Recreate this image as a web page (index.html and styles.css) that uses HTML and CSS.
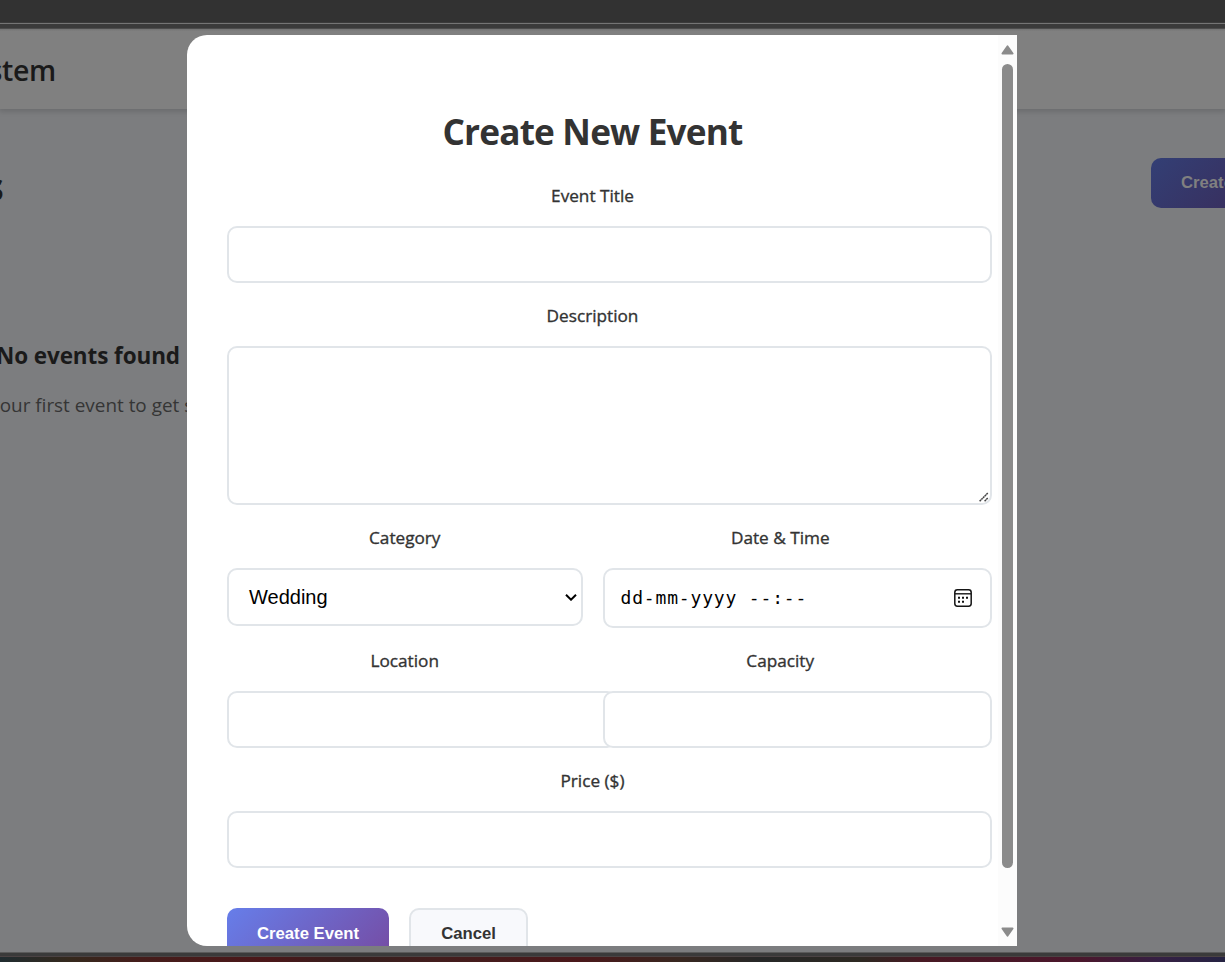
FILE: index.html
```html
<!DOCTYPE html>
<html lang="en">
<head>
<meta charset="utf-8">
<title>Create New Event</title>
<link rel="stylesheet" href="styles.css">
</head>
<body>
<div class="window-top"></div>
<div class="app">
  <header class="header"><span class="brand">System</span></header>
  <main class="main">
    <div class="page-head">
      <h1 class="page-title">Events</h1>
      <span class="btn create">Create Event</span>
    </div>
    <section class="empty">
      <h3 class="empty-title">No events found</h3>
      <p class="empty-text">Create your first event to get started</p>
    </section>
  </main>
</div>
<div class="window-bottom"></div>

<div class="overlay">
  <div class="modal">
    <div class="modal-body">
      <h2 class="title">Create New Event</h2>
      <div class="group">
        <label class="label" for="title">Event Title</label>
        <input class="field" id="title">
      </div>
      <div class="group">
        <label class="label">Description</label>
        <div class="field area">
          <svg width="10" height="10" viewBox="0 0 10 10"><path d="M.6 9.3 8.9.9M5.6 9.2l3.3-3.3" fill="none" stroke="#444" stroke-width="1.5" stroke-dasharray="2 .4"/></svg>
        </div>
      </div>
      <div class="row">
        <div class="group">
          <label class="label">Category</label>
          <div class="field select"><span>Wedding</span>
            <svg width="12" height="8" viewBox="0 0 12 8"><path d="M1 1.7 6 6.7l5-5" fill="none" stroke="#000" stroke-width="2"/></svg>
          </div>
        </div>
        <div class="group">
          <label class="label">Date &amp; Time</label>
          <div class="field date"><span class="date-value">dd-mm-yyyy --:--</span>
            <svg width="18" height="18" viewBox="0 0 18 18"><rect x=".8" y=".8" width="16.4" height="16.4" rx="2.6" fill="none" stroke="#151515" stroke-width="1.5"/><path d="M1 4.8h16" stroke="#151515" stroke-width="1.4"/><path d="M4 7.8h2v2H4zm4 0h2v2H8zm4 0h2v2h-2zm-8 4h2v2H4zm4 0h2v2H8z" fill="#111"/></svg>
          </div>
        </div>
      </div>
      <div class="row">
        <div class="group">
          <label class="label" for="loc">Location</label>
          <input class="field" id="loc">
        </div>
        <div class="group">
          <label class="label" for="cap">Capacity</label>
          <input class="field" id="cap">
        </div>
      </div>
      <div class="group">
        <label class="label" for="price">Price ($)</label>
        <input class="field" id="price">
      </div>
      <div class="actions">
        <span class="btn primary">Create Event</span>
        <span class="btn secondary">Cancel</span>
      </div>
    </div>
    <div class="scrollbar">
      <svg width="13" height="10" viewBox="0 0 13 10"><path d="M6.5 1.2 11.6 8.6H1.4z" fill="#8b8b8b" stroke="#8b8b8b" stroke-width="1.8" stroke-linejoin="round"/></svg>
      <div class="thumb"></div>
      <svg class="down" width="13" height="10" viewBox="0 0 13 10"><path d="M6.5 8.8 11.6 1.4H1.4z" fill="#8b8b8b" stroke="#8b8b8b" stroke-width="1.8" stroke-linejoin="round"/></svg>
    </div>
  </div>
</div>
</body>
</html>
```
FILE: styles.css
```css
* { box-sizing: border-box; }
body {
  margin: 0;
  height: 962px;
  overflow: hidden;
  display: flex;
  flex-direction: column;
  font-family: "Open Sans", "Noto Sans", sans-serif;
  color: #333;
}
h1, h2, h3, p { margin: 0; }
svg { display: block; flex: none; }

.window-top {
  flex: none;
  height: 29px;
  background: linear-gradient(#323232 22px, #3b3b3b 22px 23px, #757575 23px 24px, #3b3b3b 24px 28px, #4d4d4d 28px);
}
.app { flex: 1; min-height: 0; background: #7c7d7f; overflow: hidden; }
.header {
  height: 80px;
  padding-top: 21px;
  background: linear-gradient(#777 1px, #808080 2px);
  box-shadow: 0 2px 5px 1px rgba(0, 0, 0, .13);
  display: flex;
}
.brand {
  width: 56px;
  display: flex;
  justify-content: flex-end;
  font-size: 28.5px;
  line-height: 40px;
  font-weight: 600;
  letter-spacing: -.3px;
  color: #1a1a1a;
}
.page-head { display: flex; justify-content: space-between; height: 138px; padding-top: 49px; }
.page-title {
  width: 4px;
  display: flex;
  justify-content: flex-end;
  font-size: 40px;
  line-height: 56px;
  color: #1a1a1a;
}
.btn {
  flex: none;
  font-family: "Liberation Sans", Arial, sans-serif;
  font-weight: 700;
  font-size: 16.7px;
  line-height: 18px;
  height: 50px;
  border-radius: 10px;
  white-space: nowrap;
}
.create {
  width: 162px;
  margin-right: -88px;
  padding: 16px 30px;
  color: #808080;
  background: linear-gradient(135deg, #333f75, #3b2651);
}
.empty { width: 190px; padding-top: 91px; display: flex; flex-direction: column; align-items: flex-end; white-space: nowrap; }
.empty-title { font-size: 22.5px; line-height: 36px; color: #1a1a1a; margin-right: 10px; letter-spacing: -.1px; }
.empty-text { font-size: 18.9px; line-height: 28px; color: #353535; margin: 17px -57px 0 0; }
.window-bottom {
  flex: none;
  height: 10px;
  background:
    linear-gradient(#5a5a5a 1px, #3a3a3a 1px 4px, #4b4344 4px 5px, transparent 5px),
    linear-gradient(90deg, #202c30 0, #35291d 70px, #451d1b 140px, #4b1719 270px, #351f1e 350px, #431d1d 440px, #4a181a 580px, #382720 680px, #262727 760px, #2d2922 860px, #471923 920px, #4b172c 1080px, #352044 1160px, #252342);
}

.overlay { position: absolute; top: 35px; left: 187px; }
.modal {
  display: flex;
  width: 830px;
  height: 911px;
  background: #fff;
  border-radius: 20px 0 0 20px;
  overflow: hidden;
}
.modal-body { width: 811px; flex: none; padding: 72px 40px 0; }
.title {
  height: 77px;
  line-height: 48px;
  font-size: 35.2px;
  letter-spacing: -.83px;
  text-align: center;
  white-space: nowrap;
}
.group { display: flex; flex-direction: column; align-items: flex-start; margin-bottom: 21px; }
.label {
  align-self: stretch;
  text-align: center;
  font-size: 17.2px;
  line-height: 24px;
  -webkit-text-stroke: .35px #333;
  margin-bottom: 18px;
  white-space: nowrap;
}
.field {
  width: calc(100% + 34px);
  height: 57px;
  border: 2px solid #e1e5e9;
  border-radius: 10px;
  background: #fff;
  padding: 15px;
  outline: none;
  font: 20px "Liberation Sans", Arial, sans-serif;
}
.area { height: 159px; display: flex; justify-content: flex-end; align-items: flex-end; padding: 0 1px 1px 0; }
.row { display: grid; grid-template-columns: 1fr 1fr; gap: 20px; }
.select, .date { display: flex; align-items: center; justify-content: space-between; color: #000; }
.select { width: 100%; height: 58px; padding: 0 4px 0 20px; }
.date { height: 60px; padding: 0 18px 0 16px; }
.date-value {
  font: 18px "DejaVu Sans Mono", monospace;
  letter-spacing: .83px;
  white-space: nowrap;
  padding-bottom: 2px;
}
.actions { display: flex; gap: 20px; margin-top: 40px; }
.primary {
  width: 162px;
  height: 52px;
  padding: 17px 0;
  text-align: center;
  color: #fff;
  background: linear-gradient(135deg, #667eea, #764ba2);
}
.secondary {
  width: 119px;
  height: 54px;
  padding: 15px 0;
  text-align: center;
  background: #f8f9fc;
  border: 2px solid #e1e5e9;
}
.scrollbar {
  width: 19px;
  background: #fcfcfc;
  display: flex;
  flex-direction: column;
  align-items: center;
  padding: 10px 0 9px;
}
.thumb { width: 11px; height: 804px; margin-top: 9px; border-radius: 6px; background: #8b8b8b; }
.down { margin-top: auto; }
```
